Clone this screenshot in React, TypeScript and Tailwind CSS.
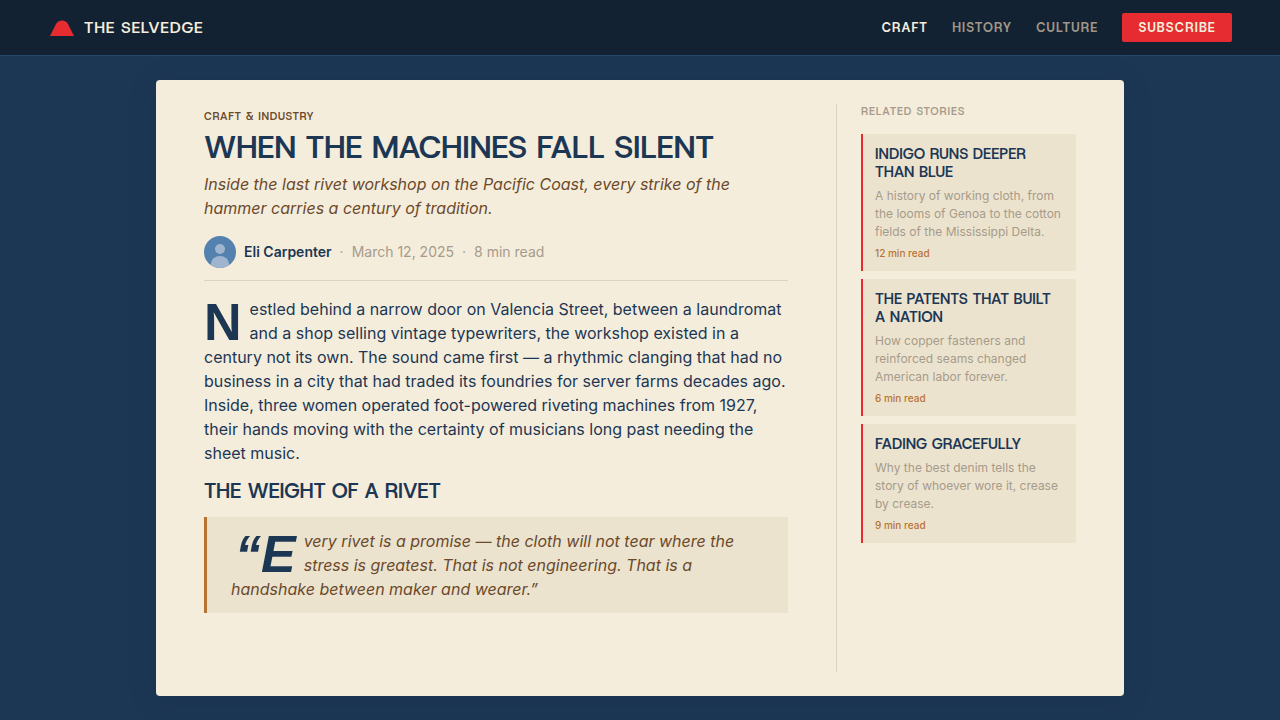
const display = "font-['Host_Grotesk','Inter',sans-serif]";

const dropCap =
  "first-letter:float-left first-letter:mr-2 first-letter:mt-[3px] first-letter:text-[52px] first-letter:leading-[44px] first-letter:font-bold first-letter:text-[#1c3754] first-letter:font-['Liberation_Sans',sans-serif]";

const navItems = [
  { label: 'Craft', active: true },
  { label: 'History', active: false },
  { label: 'Culture', active: false },
];

const related = [
  {
    title: 'Indigo Runs Deeper Than Blue',
    text: 'A history of working cloth, from the looms of Genoa to the cotton fields of the Mississippi Delta.',
    time: '12 min read',
  },
  {
    title: 'The Patents That Built a Nation',
    text: 'How copper fasteners and reinforced seams changed American labor forever.',
    time: '6 min read',
  },
  {
    title: 'Fading Gracefully',
    text: 'Why the best denim tells the story of whoever wore it, crease by crease.',
    time: '9 min read',
  },
];

function Header() {
  return (
    <header className="flex h-14 items-center justify-between border-b border-[#24466a] bg-[#122233] px-12">
      <a href="#" className="flex items-center gap-2">
        <svg viewBox="0 0 28 28" className="size-7" aria-hidden="true">
          <path d="M2 22 L8 10 Q10 6.5 14 6.5 Q18 6.5 20 10 L26 22 Z" fill="#e62b31" />
        </svg>
        <span className={`${display} text-base leading-6 font-semibold tracking-[0.05em] text-[#f5eddc] uppercase`}>
          The Selvedge
        </span>
      </a>
      <nav className={`${display} flex items-center gap-6 text-[13px] leading-[17px] font-bold tracking-[0.09em] uppercase`}>
        {navItems.map((item) => (
          <a key={item.label} href="#" className={item.active ? 'text-[#f5eddc]' : 'text-[#a09686]'}>
            {item.label}
          </a>
        ))}
        <button type="button" className="rounded-xs bg-[#e62b31] px-4 py-1.5 tracking-[0.09em] text-[#f5eddc] uppercase">
          Subscribe
        </button>
      </nav>
    </header>
  );
}

function Article() {
  return (
    <article className="min-w-0 flex-1 text-[#1c3754]">
      <p className={`${display} text-[11px] leading-6 font-semibold tracking-[0.06em] text-[#6b4a2b] uppercase`}>
        Craft &amp; Industry
      </p>
      <h1 className={`${display} mb-1.5 text-[32px] leading-[38px] font-semibold tracking-[-0.01em] uppercase`}>
        When the Machines Fall Silent
      </h1>
      <p className="mb-4 text-base leading-6 text-[#6b4a2b] italic">
        Inside the last rivet workshop on the Pacific Coast, every strike of the hammer carries a century of tradition.
      </p>
      <div className="mb-4 flex items-center gap-2 border-b border-[#dcd2bf] pb-3 text-sm text-[#a69b8a]">
        <svg viewBox="0 0 32 32" className="size-8" aria-hidden="true">
          <clipPath id="avatar">
            <circle cx="16" cy="16" r="16" />
          </clipPath>
          <g clipPath="url(#avatar)">
            <rect width="32" height="32" fill="#5581ae" />
            <circle cx="16" cy="13" r="5" fill="#9fb5cf" />
            <ellipse cx="16" cy="28" rx="9" ry="8" fill="#9fb5cf" />
          </g>
        </svg>
        <span className="font-semibold text-[#1c3754]">Eli Carpenter</span>
        <span>·</span>
        <span>March 12, 2025</span>
        <span>·</span>
        <span>8 min read</span>
      </div>
      <p className={`${dropCap} mb-3 text-base leading-6`}>
        Nestled behind a narrow door on Valencia Street, between a laundromat and a shop selling vintage typewriters,
        the workshop existed in a century not its own. The sound came first — a rhythmic clanging that had no business
        in a city that had traded its foundries for server farms decades ago. Inside, three women operated foot-powered
        riveting machines from 1927, their hands moving with the certainty of musicians long past needing the sheet
        music.
      </p>
      <h2 className={`${display} mb-3 text-[21px] leading-7 font-semibold tracking-[-0.01em] uppercase`}>
        The Weight of a Rivet
      </h2>
      <blockquote className="border-l-3 border-[#b87333] bg-[#ece3cf] px-6 py-3">
        <p className={`${dropCap} text-base leading-6 text-[#6b4a2b] italic first-letter:pl-1`}>
          “Every rivet is a promise — the cloth will not tear where the stress is greatest. That is not engineering.
          That is a handshake between maker and wearer.”
        </p>
      </blockquote>
    </article>
  );
}

function Sidebar() {
  return (
    <aside className="w-60 shrink-0 border-l border-[#dcd2bf] pl-6">
      <h2 className={`${display} mb-4 text-[11px] leading-[14px] font-semibold tracking-[0.08em] text-[#a69b8a] uppercase`}>
        Related Stories
      </h2>
      <div className="flex flex-col gap-2">
        {related.map((story) => (
          <a key={story.title} href="#" className="block rounded-r-xs border-l-2 border-[#e62b31] bg-[#ece3cf] px-3 pt-[11px] pb-2.5">
            <h3 className={`${display} mb-1.5 pr-2 text-[15px] leading-[18px] font-semibold text-[#1c3754] uppercase`}>
              {story.title}
            </h3>
            <p className="mb-[5px] text-xs leading-[18px] text-[#a69b8a]">{story.text}</p>
            <p className="text-[10px] leading-[15px] font-medium text-[#b87333]">{story.time}</p>
          </a>
        ))}
      </div>
    </aside>
  );
}

export default function App() {
  return (
    <div className="flex min-h-screen flex-col bg-[#1c3754] font-['Inter',sans-serif]">
      <Header />
      <main className="mx-auto flex w-full max-w-[1016px] flex-1 p-6">
        <div className="flex flex-1 gap-12 rounded bg-[#f5eddc] px-12 py-6 shadow-[0_4px_32px_rgba(18,34,51,0.12)]">
          <Article />
          <Sidebar />
        </div>
      </main>
    </div>
  );
}
